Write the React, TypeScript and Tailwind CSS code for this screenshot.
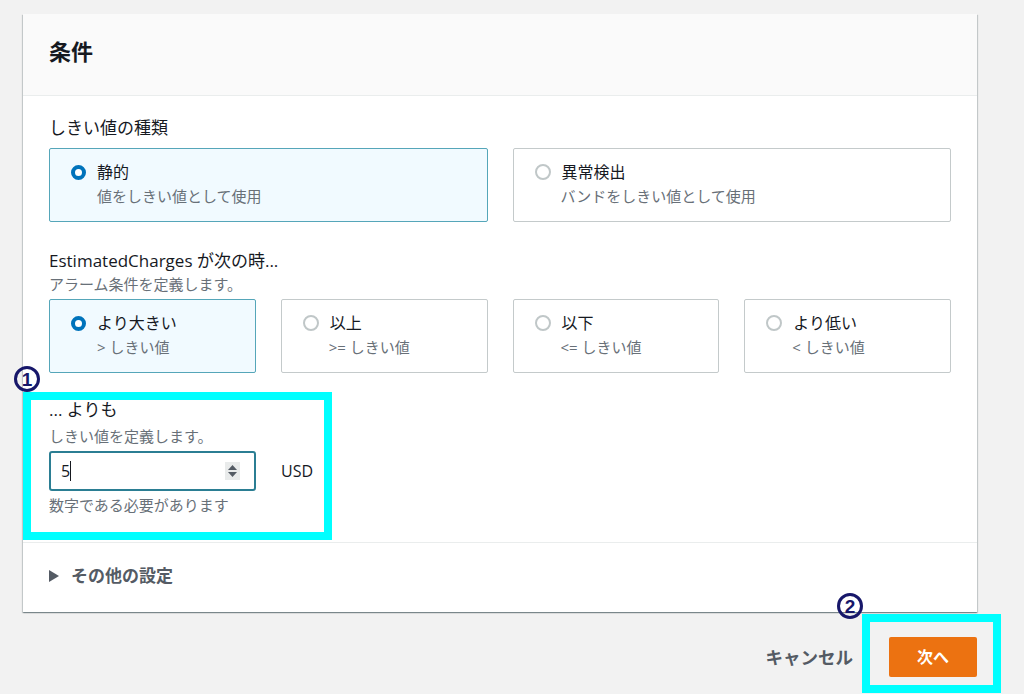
import React from 'react';

interface TileOption {
  title: string;
  description: string;
  selected?: boolean;
}

const thresholdTypes: TileOption[] = [
  { title: '静的', description: '値をしきい値として使用', selected: true },
  { title: '異常検出', description: 'バンドをしきい値として使用' },
];

const conditions: TileOption[] = [
  { title: 'より大きい', description: '> しきい値', selected: true },
  { title: '以上', description: '>= しきい値' },
  { title: '以下', description: '<= しきい値' },
  { title: 'より低い', description: '< しきい値' },
];

const Radio = ({ checked }: { checked?: boolean }) =>
  checked ? (
    <span className="w-[15px] h-[15px] rounded-full border-[4.5px] border-[#0073bb] bg-white shrink-0" />
  ) : (
    <span className="w-[16px] h-[16px] rounded-full border-[2px] border-[#c0c7c8] bg-white shrink-0" />
  );

const Tile = ({ option }: { option: TileOption }) => (
  <div
    className={`h-[74px] border rounded-[2px] pl-[21px] pr-3 pt-[12px] ${
      option.selected ? 'bg-[#f1faff] border-[#55a6b9]' : 'bg-white border-[#c4cacb]'
    }`}
  >
    <div className="flex items-center h-[22px] gap-[11px]">
      <Radio checked={option.selected} />
      <span className="text-[16px] leading-[22px] text-[#16191f]">{option.title}</span>
    </div>
    <div className="ml-[26px] mt-[3px] text-[15px] leading-[20px] text-[#687078]">
      {option.description}
    </div>
  </div>
);

const Circled = ({ n }: { n: string }) => (
  <span className="w-[26px] h-[26px] rounded-full border-[3px] border-[#17176a] flex items-center justify-center text-[19px] leading-none font-bold text-[#17176a] font-['Liberation_Sans',sans-serif]">
    {n}
  </span>
);

const App: React.FC = (): React.ReactElement => {
  return (
    <div className="relative min-h-[694px] bg-[#f2f2f2] pt-[14px] pl-[23px] overflow-hidden font-['Open_Sans','Noto_Sans_CJK_JP',sans-serif]">
      <div className="w-[954px] bg-white shadow-[0_1px_1px_0_rgba(0,28,36,0.3),1px_1px_1px_0_rgba(0,28,36,0.15),-1px_1px_1px_0_rgba(0,28,36,0.15)]">
        {/* Header */}
        <div className="bg-[#fafafa] border-b border-[#eaeded] px-[26px] pt-[22px] pb-[29px]">
          <h2 className="text-[22px] leading-[30px] font-bold text-[#16191f]">条件</h2>
        </div>

        {/* Body */}
        <div className="px-[26px] pt-[21px] pb-[27px] border-b border-[#eaeded]">
          <div className="text-[17px] leading-[22px] text-[#16191f]">しきい値の種類</div>
          <div className="mt-[9px] grid grid-cols-2 gap-[25px]">
            {thresholdTypes.map((t) => (
              <Tile key={t.title} option={t} />
            ))}
          </div>

          <div className="mt-[28px] text-[17px] leading-[22px] text-[#16191f]">EstimatedCharges が次の時...</div>
          <div className="mt-[2px] text-[15px] leading-[20px] text-[#687078]">アラーム条件を定義します。</div>
          <div className="mt-[5px] grid grid-cols-4 gap-[25px]">
            {conditions.map((c) => (
              <Tile key={c.title} option={c} />
            ))}
          </div>

          <div className="mt-[26px] text-[17px] leading-[22px] text-[#16191f]">... よりも</div>
          <div className="mt-[5px] text-[15px] leading-[20px] text-[#687078]">しきい値を定義します。</div>
          <div className="mt-[5px] flex items-center gap-[25px]">
            <div className="w-[207px] h-[40px] border-2 border-[#2b7e93] rounded-[3px] flex items-center pl-[10px] pr-[14px]">
              <span className="text-[16px] text-[#16191f]">5</span>
              <span className="w-px h-[20px] bg-[#16191f]" />
              <div className="ml-auto w-[15px] h-[18px] bg-[#e9ebeb] flex flex-col items-center justify-center gap-[2px]">
                <svg width="9" height="5" viewBox="0 0 9 5"><path d="M0 5 L4.5 0 L9 5 Z" fill="#545b64" /></svg>
                <svg width="9" height="5" viewBox="0 0 9 5"><path d="M0 0 L4.5 5 L9 0 Z" fill="#545b64" /></svg>
              </div>
            </div>
            <span className="text-[16px] text-[#16191f]">USD</span>
          </div>
          <div className="mt-[4px] text-[15px] leading-[20px] text-[#687078]">数字である必要があります</div>
        </div>

        {/* Additional settings */}
        <div className="px-[26px] pt-[21px] pb-[24px] flex items-center gap-[12px]">
          <svg width="10" height="12" viewBox="0 0 10 12"><path d="M0 0 L10 6 L0 12 Z" fill="#545b64" /></svg>
          <span className="text-[17px] leading-[24px] font-bold text-[#545b64]">その他の設定</span>
        </div>
      </div>

      {/* Footer */}
      <div className="w-[954px] mt-[25px] flex justify-end items-center">
        <button className="mr-[36px] text-[17.5px] font-bold text-[#545b64]">キャンセル</button>
        <button className="w-[88px] h-[40px] rounded-[2px] bg-[#ec7211] text-white text-[16px] font-bold">次へ</button>
      </div>

      {/* Annotations */}
      <div className="absolute left-[14px] top-[366px]"><Circled n="1" /></div>
      <div className="absolute left-[23px] top-[392px] w-[309px] h-[148px] border-[8px] border-[#00ffff] pointer-events-none" />
      <div className="absolute left-[837px] top-[593px]"><Circled n="2" /></div>
      <div className="absolute left-[862px] top-[614px] w-[139px] h-[79px] border-[8px] border-[#00ffff] pointer-events-none" />
    </div>
  );
};

export default App;
